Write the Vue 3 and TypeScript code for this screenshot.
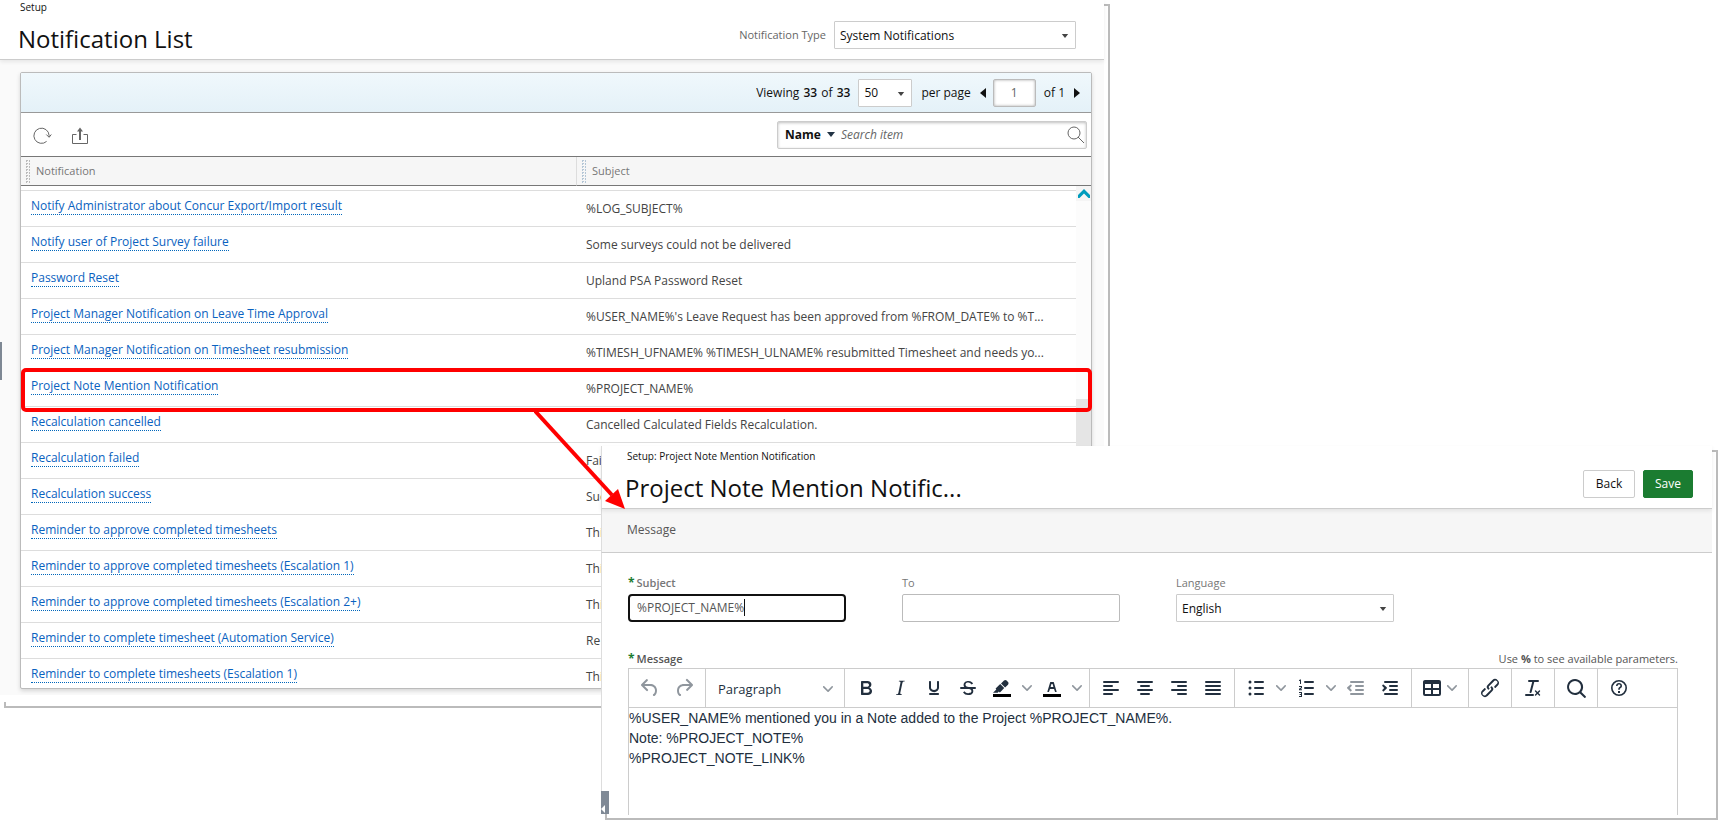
<script setup lang="ts">
import { ref } from 'vue'

interface NotificationRow {
  name: string
  subject: string
}

interface Tool {
  label: string
  paths: string[]
  strokes?: string
  menu?: boolean
  muted?: boolean
  swatch?: boolean
}

const notificationType = ref('System Notifications')
const pageSize = ref('50')
const page = ref('1')
const search = ref('')
const subject = ref('%PROJECT_NAME%')
const recipient = ref('')
const language = ref('English')
const message = ref(
  '%USER_NAME% mentioned you in a Note added to the Project %PROJECT_NAME%.\nNote: %PROJECT_NOTE%\n%PROJECT_NOTE_LINK%'
)

const rows: NotificationRow[] = [
  { name: 'Notify Administrator about Concur Export/Import result', subject: '%LOG_SUBJECT%' },
  { name: 'Notify user of Project Survey failure', subject: 'Some surveys could not be delivered' },
  { name: 'Password Reset', subject: 'Upland PSA Password Reset' },
  { name: 'Project Manager Notification on Leave Time Approval', subject: "%USER_NAME%'s Leave Request has been approved from %FROM_DATE% to %T..." },
  { name: 'Project Manager Notification on Timesheet resubmission', subject: '%TIMESH_UFNAME% %TIMESH_ULNAME% resubmitted Timesheet and needs yo...' },
  { name: 'Project Note Mention Notification', subject: '%PROJECT_NAME%' },
  { name: 'Recalculation cancelled', subject: 'Cancelled Calculated Fields Recalculation.' },
  { name: 'Recalculation failed', subject: 'Fai' },
  { name: 'Recalculation success', subject: 'Suc' },
  { name: 'Reminder to approve completed timesheets', subject: 'Thi' },
  { name: 'Reminder to approve completed timesheets (Escalation 1)', subject: 'Thi' },
  { name: 'Reminder to approve completed timesheets (Escalation 2+)', subject: 'Thi' },
  { name: 'Reminder to complete timesheet (Automation Service)', subject: 'Re' },
  { name: 'Reminder to complete timesheets (Escalation 1)', subject: 'Thi' }
]

const chevron =
  'M8.7 2.2c.3-.3.8-.3 1 0 .4.4.4.9 0 1.2L5.7 7.8c-.3.3-.9.3-1.2 0L.2 3.4a.8.8 0 0 1 0-1.2c.3-.3.8-.3 1.1 0L5 6l3.7-3.8z'

const historyTools: Tool[] = [
  { label: 'Undo', muted: true, paths: ['M6.4 8H12c3.7 0 6.2 2 6.8 5.1.6 2.7-.4 5.6-2.3 6.8a1 1 0 0 1-1-1.8c1.1-.6 1.8-2.7 1.4-4.6-.5-2.1-2.1-3.5-4.9-3.5H6.4l3.3 3.3a1 1 0 1 1-1.4 1.4l-5-5a1 1 0 0 1 0-1.4l5-5a1 1 0 0 1 1.4 1.4L6.4 8z'] },
  { label: 'Redo', muted: true, paths: ['M17.6 10H12c-2.8 0-4.4 1.4-4.9 3.5-.4 2 .3 4 1.4 4.6a1 1 0 1 1-1 1.8c-2-1.2-2.9-4.1-2.3-6.8.6-3 3-5.1 6.8-5.1h5.6l-3.3-3.3a1 1 0 1 1 1.4-1.4l5 5a1 1 0 0 1 0 1.4l-5 5a1 1 0 0 1-1.4-1.4l3.3-3.3z'] }
]

const toolGroups: Tool[][] = [
  [
    { label: 'Bold', paths: ['M7.8 19c-.3 0-.5 0-.6-.2l-.2-.5V5.7c0-.2 0-.4.2-.5l.6-.2h5c1.5 0 2.7.3 3.5 1 .7.6 1.1 1.4 1.1 2.5a3 3 0 0 1-.6 1.9c-.4.6-1 1-1.6 1.2.4.1.9.3 1.3.6s.8.7 1 1.2c.4.4.5 1 .5 1.6 0 1.3-.4 2.3-1.3 3-.8.7-2.1 1-3.8 1H7.8zm5-8.3c.6 0 1.2-.1 1.6-.5.4-.3.6-.7.6-1.3 0-1.1-.8-1.7-2.3-1.7H9.3v3.5h3.4zm.5 6c.7 0 1.3-.1 1.7-.4.4-.4.6-.9.6-1.5s-.2-1-.7-1.4c-.4-.3-1-.4-2-.4H9.4v3.8h4z'] },
    { label: 'Italic', paths: ['m16.7 4.7-.1.9h-.3c-.6 0-1 0-1.4.3-.3.3-.4.6-.5 1.1l-2.1 9.8v.6c0 .5.4.8 1.4.8h.2l-.2.8H8l.2-.8h.2c1.1 0 1.8-.5 2-1.5l2-9.8.1-.5c0-.6-.4-.8-1.4-.8h-.3l.2-.9h5.8z'] },
    { label: 'Underline', paths: ['M16 5c.6 0 1 .4 1 1v5.5a4 4 0 0 1-.4 1.8l-1 1.4a5.3 5.3 0 0 1-5.5 1 5 5 0 0 1-1.6-1c-.5-.4-.8-.9-1.1-1.4a4 4 0 0 1-.4-1.8V6c0-.6.4-1 1-1s1 .4 1 1v5.5c0 .3 0 .6.2 1l.6.7a3.3 3.3 0 0 0 2.2.8 3.4 3.4 0 0 0 2.2-.8c.3-.2.4-.5.6-.8l.2-.9V6c0-.6.4-1 1-1zM8 17h8c.6 0 1 .4 1 1s-.4 1-1 1H8a1 1 0 0 1 0-2z'] },
    { label: 'Strikethrough', paths: ['M15.6 8.5c-.5-.7-1-1.1-1.3-1.3-.6-.4-1.3-.6-2-.6-2.7 0-2.8 1.7-2.8 2.1 0 1.6 1.8 2 3.2 2.3 4.4.9 4.6 2.8 4.6 3.9 0 1.4-.7 4.1-5 4.1A6.2 6.2 0 0 1 7 16.4l1.5-1.1c.4.6 1.6 2 3.7 2 1.6 0 2.5-.4 3-1.2.4-.8.3-2-.8-2.6-.7-.4-1.6-.7-2.9-1-1-.2-3.9-.8-3.9-3.6C7.6 6 10.3 5 12.4 5c2.9 0 4.2 1.6 4.7 2.4l-1.5 1.1z', 'M5 11h14a1 1 0 0 1 0 2H5a1 1 0 0 1 0-2z'] },
    { label: 'Background color', menu: true, swatch: true, paths: ['M7.7 16.7H3l3.3-3.3-.7-.8L10.2 8l4 4.1-4 4.2c-.2.2-.6.2-.8 0l-.6-.7-1.1 1.1z', 'M11 7.4l3-2.9a2 2 0 0 1 2.6 0L18 6c.7.7.7 2 0 2.7l-2.9 2.9L11 7.4z'] },
    { label: 'Text color', menu: true, swatch: true, paths: ['M8.7 16h-.8a.5.5 0 0 1-.5-.6l2.7-9c.1-.3.3-.4.5-.4h2.8c.2 0 .4.1.5.4l2.7 9a.5.5 0 0 1-.5.6h-.8a.5.5 0 0 1-.4-.4l-.7-2.2c0-.3-.3-.4-.5-.4h-3.4c-.2 0-.4.1-.5.4l-.7 2.2c0 .3-.2.4-.4.4zm2.6-7.6-.6 2a.5.5 0 0 0 .5.6h1.6a.5.5 0 0 0 .5-.6l-.6-2c0-.3-.3-.4-.5-.4h-.4c-.2 0-.4.1-.5.4z'] }
  ],
  [
    { label: 'Align left', paths: [], strokes: 'M5 6h14M5 10h8M5 14h14M5 18h8' },
    { label: 'Align center', paths: [], strokes: 'M5 6h14M8 10h8M5 14h14M8 18h8' },
    { label: 'Align right', paths: [], strokes: 'M5 6h14M11 10h8M5 14h14M11 18h8' },
    { label: 'Justify', paths: [], strokes: 'M5 6h14M5 10h14M5 14h14M5 18h14' }
  ],
  [
    { label: 'Bullet list', menu: true, paths: ['M4.5 6a1.5 1.5 0 1 1 3 0 1.5 1.5 0 0 1-3 0zM4.5 12a1.5 1.5 0 1 1 3 0 1.5 1.5 0 0 1-3 0zM4.5 18a1.5 1.5 0 1 1 3 0 1.5 1.5 0 0 1-3 0z'], strokes: 'M11 6h8M11 12h8M11 18h8' },
    { label: 'Numbered list', menu: true, paths: ['M6 3.5h1V8H6V5H5V4.2zM5 10h3v2l-1.7 1.2H8v1H5v-1.4l2-1.4V11H5zM5 16h3v5H5v-1h2v-1H5.6v-1H7v-1H5z'], strokes: 'M11 6h8M11 12h8M11 18h8' },
    { label: 'Decrease indent', muted: true, paths: ['M7.6 8.9a1 1 0 0 1-.1 1.3L5.8 12l1.7 1.8a1 1 0 0 1-1.4 1.4L3.3 12.6a1 1 0 0 1 0-1.3L6.2 8.8a1 1 0 0 1 1.4.1z'], strokes: 'M7 6h12M12 10h7M12 14h7M7 18h12' },
    { label: 'Increase indent', paths: ['M4.4 8.9a1 1 0 0 1 1.4-.1l2.9 2.5a1 1 0 0 1 0 1.3l-2.8 2.6a1 1 0 0 1-1.4-1.4L6.2 12l-1.7-1.8a1 1 0 0 1-.1-1.3z'], strokes: 'M7 6h12M12 10h7M12 14h7M7 18h12' }
  ],
  [{ label: 'Table', menu: true, paths: ['M19 4a2 2 0 0 1 2 2v12a2 2 0 0 1-2 2H5a2 2 0 0 1-2-2V6c0-1.1.9-2 2-2h14zM5 14v4h6v-4H5zm14 0h-6v4h6v-4zm0-6h-6v4h6V8zM5 12h6V8H5v4z'] }],
  [{ label: 'Insert link', paths: ['M6.2 12.3a1 1 0 0 1 1.4 1.4l-2 2a2 2 0 1 0 2.6 2.8l4.8-4.8a1 1 0 0 0 0-1.4 1 1 0 1 1 1.4-1.3 2.9 2.9 0 0 1 0 4L9.6 20a3.9 3.9 0 0 1-5.5-5.5l2-2zm11.6-.6a1 1 0 0 1-1.4-1.4l2-2a2 2 0 1 0-2.6-2.8L11 10.3a1 1 0 0 0 0 1.4A1 1 0 1 1 9.6 13a2.9 2.9 0 0 1 0-4L14.4 4a3.9 3.9 0 0 1 5.5 5.5l-2 2z'] }],
  [{ label: 'Clear formatting', paths: ['M13.2 6a1 1 0 0 1 0 .2l-2.6 10a1 1 0 0 1-1 .8h-.2a.8.8 0 0 1-.8-1l2.6-10H8a1 1 0 1 1 0-2h9a1 1 0 0 1 0 2h-3.8zM5 18h7a1 1 0 0 1 0 2H5a1 1 0 0 1 0-2zm13 1.5L16.5 18 15 19.5a.7.7 0 0 1-1-1l1.5-1.5-1.5-1.5a.7.7 0 0 1 1-1l1.5 1.5 1.5-1.5a.7.7 0 0 1 1 1L17.5 17l1.5 1.5a.7.7 0 0 1-1 1z'] }],
  [{ label: 'Find', paths: ['M16 17.3a8 8 0 1 1 1.4-1.4l4.3 4.4a1 1 0 0 1-1.4 1.4l-4.4-4.3zm-5-.3a6 6 0 1 0 0-12 6 6 0 0 0 0 12z'] }],
  [{ label: 'Help', paths: ['M12 4a8 8 0 1 1 0 16 8 8 0 0 1 0-16zm0 1.6a6.4 6.4 0 1 0 0 12.8 6.4 6.4 0 0 0 0-12.8z', 'M11 15h2v2h-2zM9 10c0-1.9 1.3-3 3-3s3 1.1 3 2.7c0 1.5-.8 2-1.5 2.5-.5.4-.7.7-.7 1.5h-1.6c0-1.4.4-2 1.2-2.6.7-.5 1-.8 1-1.4 0-.7-.6-1.2-1.4-1.2-.9 0-1.4.6-1.4 1.5z'] }]
]
</script>

<template>
  <main class="stage">
    <section class="panel list-panel" aria-label="Notification List">
      <header class="head list-head">
        <div class="titles">
          <p class="crumb">Setup</p>
          <h1>Notification List</h1>
        </div>
        <div class="type-field">
          <label for="type">Notification Type</label>
          <div class="select type-select">
            <select id="type" v-model="notificationType"><option>System Notifications</option></select>
            <svg class="caret" viewBox="0 0 8 5"><path d="M0 0h8L4 5z" /></svg>
          </div>
        </div>
      </header>

      <div class="list-body">
        <div class="card">
          <div class="pager">
            <span>Viewing <b>33</b> of <b>33</b></span>
            <div class="select size-select">
              <select v-model="pageSize" aria-label="Items per page"><option>50</option></select>
              <svg class="caret" viewBox="0 0 8 5"><path d="M0 0h8L4 5z" /></svg>
            </div>
            <span>per page</span>
            <button class="step" type="button" aria-label="Previous page">
              <svg viewBox="0 0 6 10"><path d="M6 0v10L0 5z" /></svg>
            </button>
            <input v-model="page" class="page-input" aria-label="Page" />
            <span>of 1</span>
            <button class="step" type="button" aria-label="Next page">
              <svg viewBox="0 0 6 10"><path d="M0 0v10l6-5z" /></svg>
            </button>
          </div>

          <div class="actions">
            <button class="plain action" type="button" aria-label="Refresh">
              <svg viewBox="0 0 20 20" class="outline">
                <path d="M14.6 15.4A7.6 7.6 0 1 1 17.1 9.5V11" /><path d="M14.3 8.5l2.8 2.8 2.2-2.8" />
              </svg>
            </button>
            <button class="plain action" type="button" aria-label="Export">
              <svg viewBox="0 0 20 20" class="outline">
                <path d="M6.5 8.500h-4v9h15v-9h-4" /><path d="M10 14V3.500" stroke-width="2" /><path d="M7 5.500l3-4 3 4z" fill="#666" stroke="none" />
              </svg>
            </button>
            <div class="search">
              <button class="search-by" type="button">Name <svg viewBox="0 0 8 5"><path d="M0 0h8L4 5z" /></svg></button>
              <input v-model="search" placeholder="Search item" aria-label="Search item" />
              <button class="plain" type="button" aria-label="Search">
                <svg viewBox="0 0 20 20" class="outline"><circle cx="9" cy="8" r="6" /><path d="M13 12l6 6" /></svg>
              </button>
            </div>
          </div>

          <div class="grid">
            <table>
              <colgroup><col class="col-name" /><col /></colgroup>
              <thead>
                <tr>
                  <th scope="col"><i class="grip" />Notification</th>
                  <th scope="col"><i class="grip blue" />Subject</th>
                </tr>
              </thead>
              <tbody>
                <tr class="peek" aria-hidden="true"><td colspan="2" /></tr>
                <tr v-for="row in rows" :key="row.name">
                  <td class="name"><a href="#">{{ row.name }}</a></td>
                  <td class="subject">{{ row.subject }}</td>
                </tr>
              </tbody>
            </table>
            <div class="scroll">
              <div class="scroll-cap" />
              <button class="scroll-up" type="button" aria-label="Scroll up">
                <svg viewBox="0 0 12 9"><path d="M6 0l6 6v3h-1.500L6 4.500 1.500 9H0V6z" /></svg>
              </button>
              <div class="scroll-track"><div class="scroll-thumb" /></div>
            </div>
          </div>
        </div>
      </div>
      <i class="side-tab" />
      <div class="highlight" />
    </section>

    <section class="panel edit-panel" aria-label="Project Note Mention Notification">
      <header class="head edit-head">
        <div class="titles">
          <p class="crumb">Setup: Project Note Mention Notification</p>
          <h1>Project Note Mention Notific...</h1>
        </div>
        <div class="head-buttons">
          <button class="btn" type="button">Back</button>
          <button class="btn primary" type="button">Save</button>
        </div>
      </header>
      <h2>Message</h2>
      <form class="form" @submit.prevent>
        <div class="fields">
          <div class="field">
            <label class="required" for="subject"><em>*</em>Subject</label>
            <div class="focus-box"><input id="subject" v-model="subject" /><i class="text-cursor" /></div>
          </div>
          <div class="field">
            <label for="to">To</label>
            <input id="to" v-model="recipient" class="box" />
          </div>
          <div class="field">
            <label for="language">Language</label>
            <div class="select">
              <select id="language" v-model="language"><option>English</option></select>
              <svg class="caret" viewBox="0 0 8 5"><path d="M0 0h8L4 5z" /></svg>
            </div>
          </div>
        </div>

        <div class="message-line">
          <label class="required" for="message"><em>*</em>Message</label>
          <span>Use <b>%</b> to see available parameters.</span>
        </div>
        <div class="editor">
          <div class="toolbar" role="toolbar" aria-label="Formatting">
            <div class="group">
              <button v-for="tool in historyTools" :key="tool.label" type="button" class="tool muted" :aria-label="tool.label">
                <svg class="icon" viewBox="0 0 24 24"><path v-for="d in tool.paths" :key="d" :d="d" /></svg>
              </button>
            </div>
            <div class="group">
              <button class="format" type="button">
                Paragraph
                <svg class="chevron" viewBox="0 0 10 10"><path :d="chevron" /></svg>
              </button>
            </div>
            <div v-for="(group, index) in toolGroups" :key="index" class="group">
              <button
                v-for="tool in group"
                :key="tool.label"
                type="button"
                class="tool"
                :class="{ muted: tool.muted, split: tool.menu }"
                :aria-label="tool.label"
              >
                <svg class="icon" viewBox="0 0 24 24">
                  <path v-if="tool.swatch" class="swatch" d="M3 18h18v3H3z" />
                  <path v-for="d in tool.paths" :key="d" :d="d" fill-rule="evenodd" />
                  <path v-if="tool.strokes" class="lines" :d="tool.strokes" />
                </svg>
                <svg v-if="tool.menu" class="chevron" viewBox="0 0 10 10"><path :d="chevron" /></svg>
              </button>
            </div>
          </div>
          <textarea id="message" v-model="message" />
        </div>
      </form>
      <i class="corner-tab"><svg viewBox="0 0 4 8"><path d="M4 0v8L0 4z" /></svg></i>
      <svg class="arrow" viewBox="0 0 92 100">
        <path d="M1 0L78 84" stroke="#f00" stroke-width="4" />
        <path d="M91 98L71 90 84 78z" fill="#f00" />
      </svg>
    </section>
  </main>
</template>

<style>
body {
  margin: 0;
  background: #fff;
}
</style>

<style scoped>
.stage,
.stage * {
  box-sizing: border-box;
}

.stage {
  display: grid;
  grid-template-columns: 601fr 503fr 608fr 17fr;
  grid-template-rows: 446px 256px auto;
  min-height: 100vh;
  overflow: hidden;
  font: 12px/16px "Open Sans", "Noto Sans", sans-serif;
  color: #111;
}

button,
input,
select,
textarea {
  font: inherit;
  color: inherit;
}

button {
  display: flex;
  align-items: center;
  justify-content: center;
  padding: 0;
  border: 0;
  background: none;
}

svg {
  display: block;
  fill: currentColor;
}

.outline {
  fill: none;
  stroke: #666;
}

p,
h1,
h2 {
  margin: 0;
  font-weight: 400;
}

/* Windows, each with an offset outline behind its lower right side */
.panel {
  position: relative;
  min-width: 0;
}

.panel::before {
  content: "";
  position: absolute;
  z-index: -1;
  inset: 4px -6px -6px 4px;
  border: 2px solid #bbb;
}

.list-panel {
  z-index: 1;
  grid-column: 1 / 3;
  grid-row: 1 / 3;
}

.edit-panel {
  z-index: 2;
  grid-column: 2 / 4;
  grid-row: 2 / 4;
  align-self: start;
}

.head {
  position: relative;
  z-index: 1;
  display: flex;
  justify-content: space-between;
  border-bottom: 1px solid #ccc;
  background: #fff;
  box-shadow: 0 2px 4px rgba(0, 0, 0, 0.08);
}

.crumb {
  padding-left: 2px;
  font-size: 10px;
  line-height: 14px;
}

h1 {
  font-size: 24px;
  line-height: 32px;
}

.list-head {
  height: 60px;
  padding: 0 28px 0 18px;
}

.list-head h1 {
  margin-top: 9px;
}

.type-field {
  display: flex;
  align-items: center;
  gap: 8px;
  height: 28px;
  margin-top: 21px;
  color: #666;
  font-size: 11px;
}

.type-select {
  width: 242px;
}

.select {
  position: relative;
  height: 28px;
  color: #111;
  font-size: 12px;
}

.select select {
  width: 100%;
  height: 28px;
  padding: 1px 20px 0 5px;
  border: 1px solid #ccc;
  border-radius: 1px;
  background: #fff;
  appearance: none;
}

.caret {
  position: absolute;
  top: 13px;
  right: 7px;
  width: 8px;
  height: 4px;
  color: #444;
}

.list-body {
  height: 642px;
  padding: 12px 12px 6px 20px;
  border-bottom: 7px solid #fff;
  background: #fafafa;
}

.card {
  height: 617px;
  overflow: hidden;
  border: 1px solid #bbb;
  border-radius: 2px;
  background: #fff;
  box-shadow: 0 2px 4px rgba(0, 0, 0, 0.15);
}

.pager {
  display: flex;
  align-items: center;
  justify-content: flex-end;
  height: 40px;
  padding-right: 11px;
  border-bottom: 1px solid #999;
  background: linear-gradient(#f0f8fc, #e4f1f8);
}

.pager b {
  margin: 0 1px;
  font-weight: 600;
}

.size-select {
  width: 54px;
  margin: 0 9px 0 7px;
}

.step {
  width: 6px;
  height: 10px;
  margin-left: 9px;
}

.step svg {
  width: 6px;
  height: 10px;
}

.page-input {
  width: 43px;
  height: 28px;
  margin: 0 8px 0 7px;
  border: 1px solid #bbb;
  border-radius: 2px;
  background: #fff;
  box-shadow: inset 0 0 3px rgba(0, 0, 0, 0.35);
  color: #666;
  text-align: center;
}

.actions {
  display: flex;
  align-items: center;
  gap: 18px;
  height: 44px;
  padding: 0 4px 0 11px;
  border-bottom: 1px solid #777;
}

.plain,
.plain svg {
  width: 20px;
  height: 20px;
}

.action {
  margin-top: 2px;
}

.search {
  display: flex;
  align-items: center;
  width: 310px;
  height: 28px;
  margin-left: auto;
  padding: 0 1px 0 7px;
  border: 1px solid #ccc;
  border-radius: 2px;
  box-shadow: inset 0 1px 3px rgba(0, 0, 0, 0.25);
}

.search-by {
  gap: 6px;
  color: #111;
  font-weight: 700;
}

.search-by svg {
  width: 8px;
  height: 5px;
  color: #234;
}

.search input {
  flex: 1;
  min-width: 0;
  margin: 0;
  padding: 0 0 0 6px;
  border: 0;
  outline: 0;
  background: none;
}

.search input::placeholder {
  color: #666;
  font-style: italic;
}

.grid {
  display: grid;
  grid-template-columns: 1fr 15px;
}

table {
  width: 100%;
  height: min-content;
  border-collapse: separate;
  border-spacing: 0;
  table-layout: fixed;
}

.col-name {
  width: 556px;
}

th {
  height: 29px;
  padding: 1px 0 0 4px;
  border-bottom: 1px solid #777;
  background: #f6f6f6;
  color: #777;
  font-size: 11px;
  font-weight: 400;
  text-align: left;
}

th:first-child {
  border-right: 1px solid #ddd;
}

.grip {
  display: inline-block;
  width: 5px;
  height: 24px;
  margin-right: 6px;
  background: repeating-conic-gradient(#bbb 0 25%, transparent 0 100%) 0 0 / 3px 3px;
  vertical-align: middle;
}

.grip.blue {
  background: repeating-conic-gradient(#b4c6d6 0 25%, transparent 0 100%) 0 0 / 3px 3px;
}

td {
  height: 36px;
  padding: 0 0 0 10px;
  border-bottom: 1px solid #ddd;
  color: #444;
  vertical-align: top;
  white-space: nowrap;
}

.peek td {
  height: 5px;
}

.name {
  padding-top: 7px;
}

.name a {
  display: inline-block;
  border-bottom: 1px dotted #06b;
  color: #0a62c0;
  line-height: 16px;
  text-decoration: none;
}

.subject {
  padding-top: 10px;
  padding-left: 9px;
}

.scroll {
  display: flex;
  flex-direction: column;
  background: #fcfcfc;
}

.scroll-cap {
  height: 29px;
  border-bottom: 1px solid #777;
  background: #f6f6f6;
}

.scroll-up {
  height: 15px;
  background: #f5f5f5;
  color: #009cbd;
}

.scroll-up svg {
  width: 12px;
  height: 9px;
}

.scroll-track {
  flex: 1;
  padding-top: 198px;
}

.scroll-thumb {
  height: 120px;
  background: #e5e5e5;
}

.side-tab {
  position: absolute;
  top: 342px;
  left: 0;
  width: 2px;
  height: 38px;
  background: #7e8894;
}

.highlight {
  position: absolute;
  top: 368px;
  right: 12px;
  left: 21px;
  height: 44px;
  border: 4px solid #f00;
  border-radius: 5px;
}

/* Edit window */
.edit-head {
  height: 63px;
  padding: 3px 19px 0 23px;
  border-left: 1px solid #ddd;
}

.edit-head h1 {
  margin-top: 9px;
}

.head-buttons {
  display: flex;
  gap: 8px;
  margin-top: 21px;
}

.btn {
  width: 52px;
  height: 28px;
  border: 1px solid #ccc;
  border-radius: 2px;
  background: #fff;
}

.btn.primary {
  width: 50px;
  border-color: #1b7c31;
  background: #1b7c31;
  color: #fff;
}

h2 {
  height: 44px;
  padding-left: 25px;
  border-bottom: 1px solid #ccc;
  border-left: 1px solid #ddd;
  background: #f6f6f6;
  color: #555;
  font-size: 12px;
  line-height: 42px;
}

.form {
  height: 261px;
  padding: 21px 34px 0 26px;
  border-left: 1px solid #ddd;
  background: #fff;
}

.fields {
  display: grid;
  grid-template-columns: repeat(3, 218px);
  gap: 56px;
}

.field label,
.message-line {
  display: block;
  height: 20px;
  color: #777;
  font-size: 11px;
  line-height: 18px;
}

.required em {
  margin-right: 2px;
  color: #1b7c31;
  font-size: 12px;
  font-style: normal;
  font-weight: 700;
}

.field .required,
.message-line .required {
  font-weight: 600;
}

.focus-box {
  position: relative;
  display: flex;
  align-items: center;
  height: 28px;
  padding-left: 7px;
  border: 2px solid #111;
  border-radius: 4px;
  background: #fff;
}

.focus-box input {
  width: 100%;
  padding: 0;
  border: 0;
  outline: 0;
  background: none;
  color: #555;
}

.text-cursor {
  position: absolute;
  top: 3px;
  left: 114px;
  width: 1px;
  height: 17px;
  background: #111;
}

.box {
  display: block;
  width: 100%;
  height: 28px;
  border: 1px solid #bbb;
  border-radius: 2px;
}

.message-line {
  display: flex;
  justify-content: space-between;
  height: 18px;
  margin-top: 28px;
  color: #555;
}

.editor {
  border: solid #ccc;
  border-width: 1px 1px 0;
}

.toolbar {
  display: flex;
  flex-wrap: wrap;
  min-height: 39px;
  border-bottom: 1px solid #ccc;
  color: #222f3e;
}

.group {
  display: flex;
  padding: 2px 4px;
  border-right: 1px solid #ccc;
}

.group:last-child {
  border-right: 0;
}

.tool {
  width: 34px;
  height: 34px;
}

.icon {
  flex: none;
  width: 24px;
  height: 24px;
}

.lines {
  fill: none;
  stroke: currentColor;
  stroke-linecap: round;
  stroke-width: 2;
}

.swatch {
  fill: #000;
}

.tool.split {
  gap: 8px;
  width: 50px;
  padding: 0 3px 0 5px;
}

.tool.split:only-child {
  gap: 3px;
  width: 48px;
  padding: 0 7px 0 4px;
}

.muted .icon,
.chevron {
  opacity: 0.5;
}

.chevron {
  flex: none;
  width: 10px;
  height: 10px;
}

.format {
  justify-content: space-between;
  width: 130px;
  height: 34px;
  padding: 1px 7px 0 8px;
  font-size: 13px;
}

textarea {
  display: block;
  width: 100%;
  height: 107px;
  padding: 0;
  border: 0;
  outline: 0;
  background: #fff;
  color: #222f3e;
  font-family: "Liberation Sans", Arial, sans-serif;
  font-size: 14px;
  line-height: 20px;
  resize: none;
}

.corner-tab {
  position: absolute;
  bottom: 0;
  left: 0;
  display: flex;
  align-items: flex-end;
  width: 8px;
  height: 23px;
  padding-bottom: 1px;
  background: #808a96;
  color: #fff;
}

.corner-tab svg {
  width: 4px;
  height: 8px;
}

.arrow {
  position: absolute;
  top: -35px;
  left: -67px;
  z-index: 2;
  width: 92px;
  height: 100px;
}
</style>
